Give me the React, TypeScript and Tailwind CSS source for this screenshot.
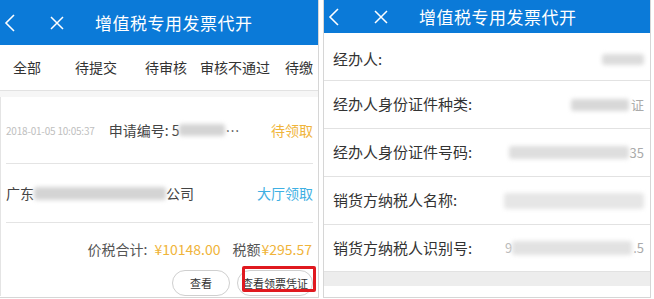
const FONT = "font-['Noto_Sans_CJK_SC','Noto_Sans',sans-serif]";

/** Thin white back chevron and close cross in the blue title bar */
function NavIcons() {
  return (
    <>
      <svg width="12" height="20" viewBox="0 0 12 20" className="ml-[4px] shrink-0">
        <path d="M10 2 L2 10 L10 18" fill="none" stroke="white" strokeWidth="1.6" />
      </svg>
      <svg width="14" height="14" viewBox="0 0 14 14" className="ml-[34px] shrink-0">
        <path d="M1 1 L13 13 M13 1 L1 13" fill="none" stroke="white" strokeWidth="1.5" />
      </svg>
    </>
  );
}

/** Smudged-out value, as in the masked screenshot */
function Blur({ w, h = 12, tone = "bg-[#d4d4d4]" }: { w: number; h?: number; tone?: string }) {
  return <span className={`inline-block rounded-[3px] blur-[2px] ${tone}`} style={{ width: w, height: h }} />;
}

const TABS = [
  { label: "全部", cls: "ml-[13px]" },
  { label: "待提交", cls: "ml-[34px]" },
  { label: "待审核", cls: "ml-[28px]" },
  { label: "审核不通过", cls: "ml-[13px]" },
  { label: "待缴", cls: "ml-[15px]" },
];

function OrderList() {
  return (
    <div className="relative w-[319px] h-[298px] shrink-0 flex flex-col overflow-hidden border-r border-b border-[#d6d6d6]">
      <div className="h-[45px] shrink-0 bg-[#0b7ad8] flex items-center text-white">
        <NavIcons />
        <span className="ml-[31px] text-[17px] tracking-[0.5px]">增值税专用发票代开</span>
      </div>

      <div className="h-[46px] shrink-0 flex items-center text-[14px] text-[#333] whitespace-nowrap border-b border-[#e2e2e2]">
        {TABS.map((t) => (
          <span key={t.label} className={t.cls}>
            {t.label}
          </span>
        ))}
      </div>
      <div className="h-[6px] shrink-0 bg-[#f6f6f6]" />

      <div className="px-[5px] flex flex-col border-l border-[#e4e4e4]">
        <div className="h-[67px] flex items-center border-b border-[#e4e4e4] whitespace-nowrap">
          <span className="text-[10px] text-[#c0c0c0] tracking-[-0.2px]">2018-01-05 10:05:37</span>
          <span className="ml-[14px] text-[14px] text-[#444]">申请编号: 5</span>
          <Blur w={46} />
          <span className="text-[14px] text-[#444]">…</span>
          <span className="ml-auto text-[14px] text-[#f0b43a]">待领取</span>
        </div>

        <div className="h-[59px] flex items-center border-b border-[#e4e4e4] whitespace-nowrap text-[14px]">
          <span className="text-[#444]">广东</span>
          <Blur w={132} h={13} />
          <span className="text-[#444]">公司</span>
          <span className="ml-auto text-[#3fb0e3]">大厅领取</span>
        </div>

        <div className="flex flex-col items-end pt-[16px] whitespace-nowrap">
          <div className="flex items-center text-[14px] pr-[1px]">
            <span className="text-[#555]">价税合计:</span>
            <span className="ml-[7px] text-[#f0b43a]">¥10148.00</span>
            <span className="ml-[12px] text-[#555]">税额</span>
            <span className="ml-[1px] text-[#f0b43a]">¥295.57</span>
          </div>
          <div className="mt-[10px] flex gap-[7px] text-[11px] text-[#333]">
            <button className="w-[58px] h-[26px] rounded-full border border-[#cfcfcf] bg-white">查看</button>
            <button className="w-[76px] h-[26px] rounded-full border border-[#cfcfcf] bg-white">查看领票凭证</button>
          </div>
        </div>
      </div>

      <div className="absolute left-[242px] top-[266px] w-[74px] h-[26px] border-[3px] border-[#e0191f] rounded-[2px]" />
    </div>
  );
}

const FIELDS = [
  { label: "经办人:", value: <Blur w={42} h={11} tone="bg-[#dcdcdc]" /> },
  {
    label: "经办人身份证件种类:",
    value: (
      <>
        <Blur w={58} h={12} tone="bg-[#d8d8d8]" />
        <span className="ml-[2px] text-[#aaa]">证</span>
      </>
    ),
  },
  {
    label: "经办人身份证件号码:",
    value: (
      <>
        <Blur w={120} h={13} tone="bg-[#dedede]" />
        <span className="ml-[1px] text-[#aaa]">35</span>
      </>
    ),
  },
  { label: "销货方纳税人名称:", value: <Blur w={140} h={16} tone="bg-[#e6e6e6]" /> },
  {
    label: "销货方纳税人识别号:",
    value: (
      <>
        <span className="text-[#bbb]">9</span>
        <Blur w={120} h={14} tone="bg-[#e2e2e2]" />
        <span className="ml-[1px] text-[#aaa]">.5</span>
      </>
    ),
  },
];

function Detail() {
  return (
    <div className="ml-[4px] w-[328px] h-[298px] shrink-0 flex flex-col overflow-hidden border-l border-r border-b border-[#d6d6d6]">
      <div className="h-[33px] shrink-0 bg-[#0b7ad8] flex items-center text-white">
        <NavIcons />
        <span className="ml-[31px] text-[17px] tracking-[0.5px]">增值税专用发票代开</span>
      </div>
      {FIELDS.map((f, i) => (
        <div
          key={f.label}
          className={`shrink-0 flex items-center pl-[9px] pr-[6px] border-b border-[#e2e2e2] whitespace-nowrap ${
            i === 0 ? "h-[48px] pt-[6px]" : i === 4 ? "h-[47px]" : "h-[48px]"
          }`}
        >
          <span className="text-[15px] text-[#333]">{f.label}</span>
          <span className="ml-auto flex items-center text-[13px]">{f.value}</span>
        </div>
      ))}
      <div className="h-[14px] shrink-0 bg-[#ededed]" />
    </div>
  );
}

export default function App() {
  return (
    <div className={`w-[654px] h-[299px] bg-white flex overflow-hidden ${FONT}`}>
      <OrderList />
      <Detail />
    </div>
  );
}
